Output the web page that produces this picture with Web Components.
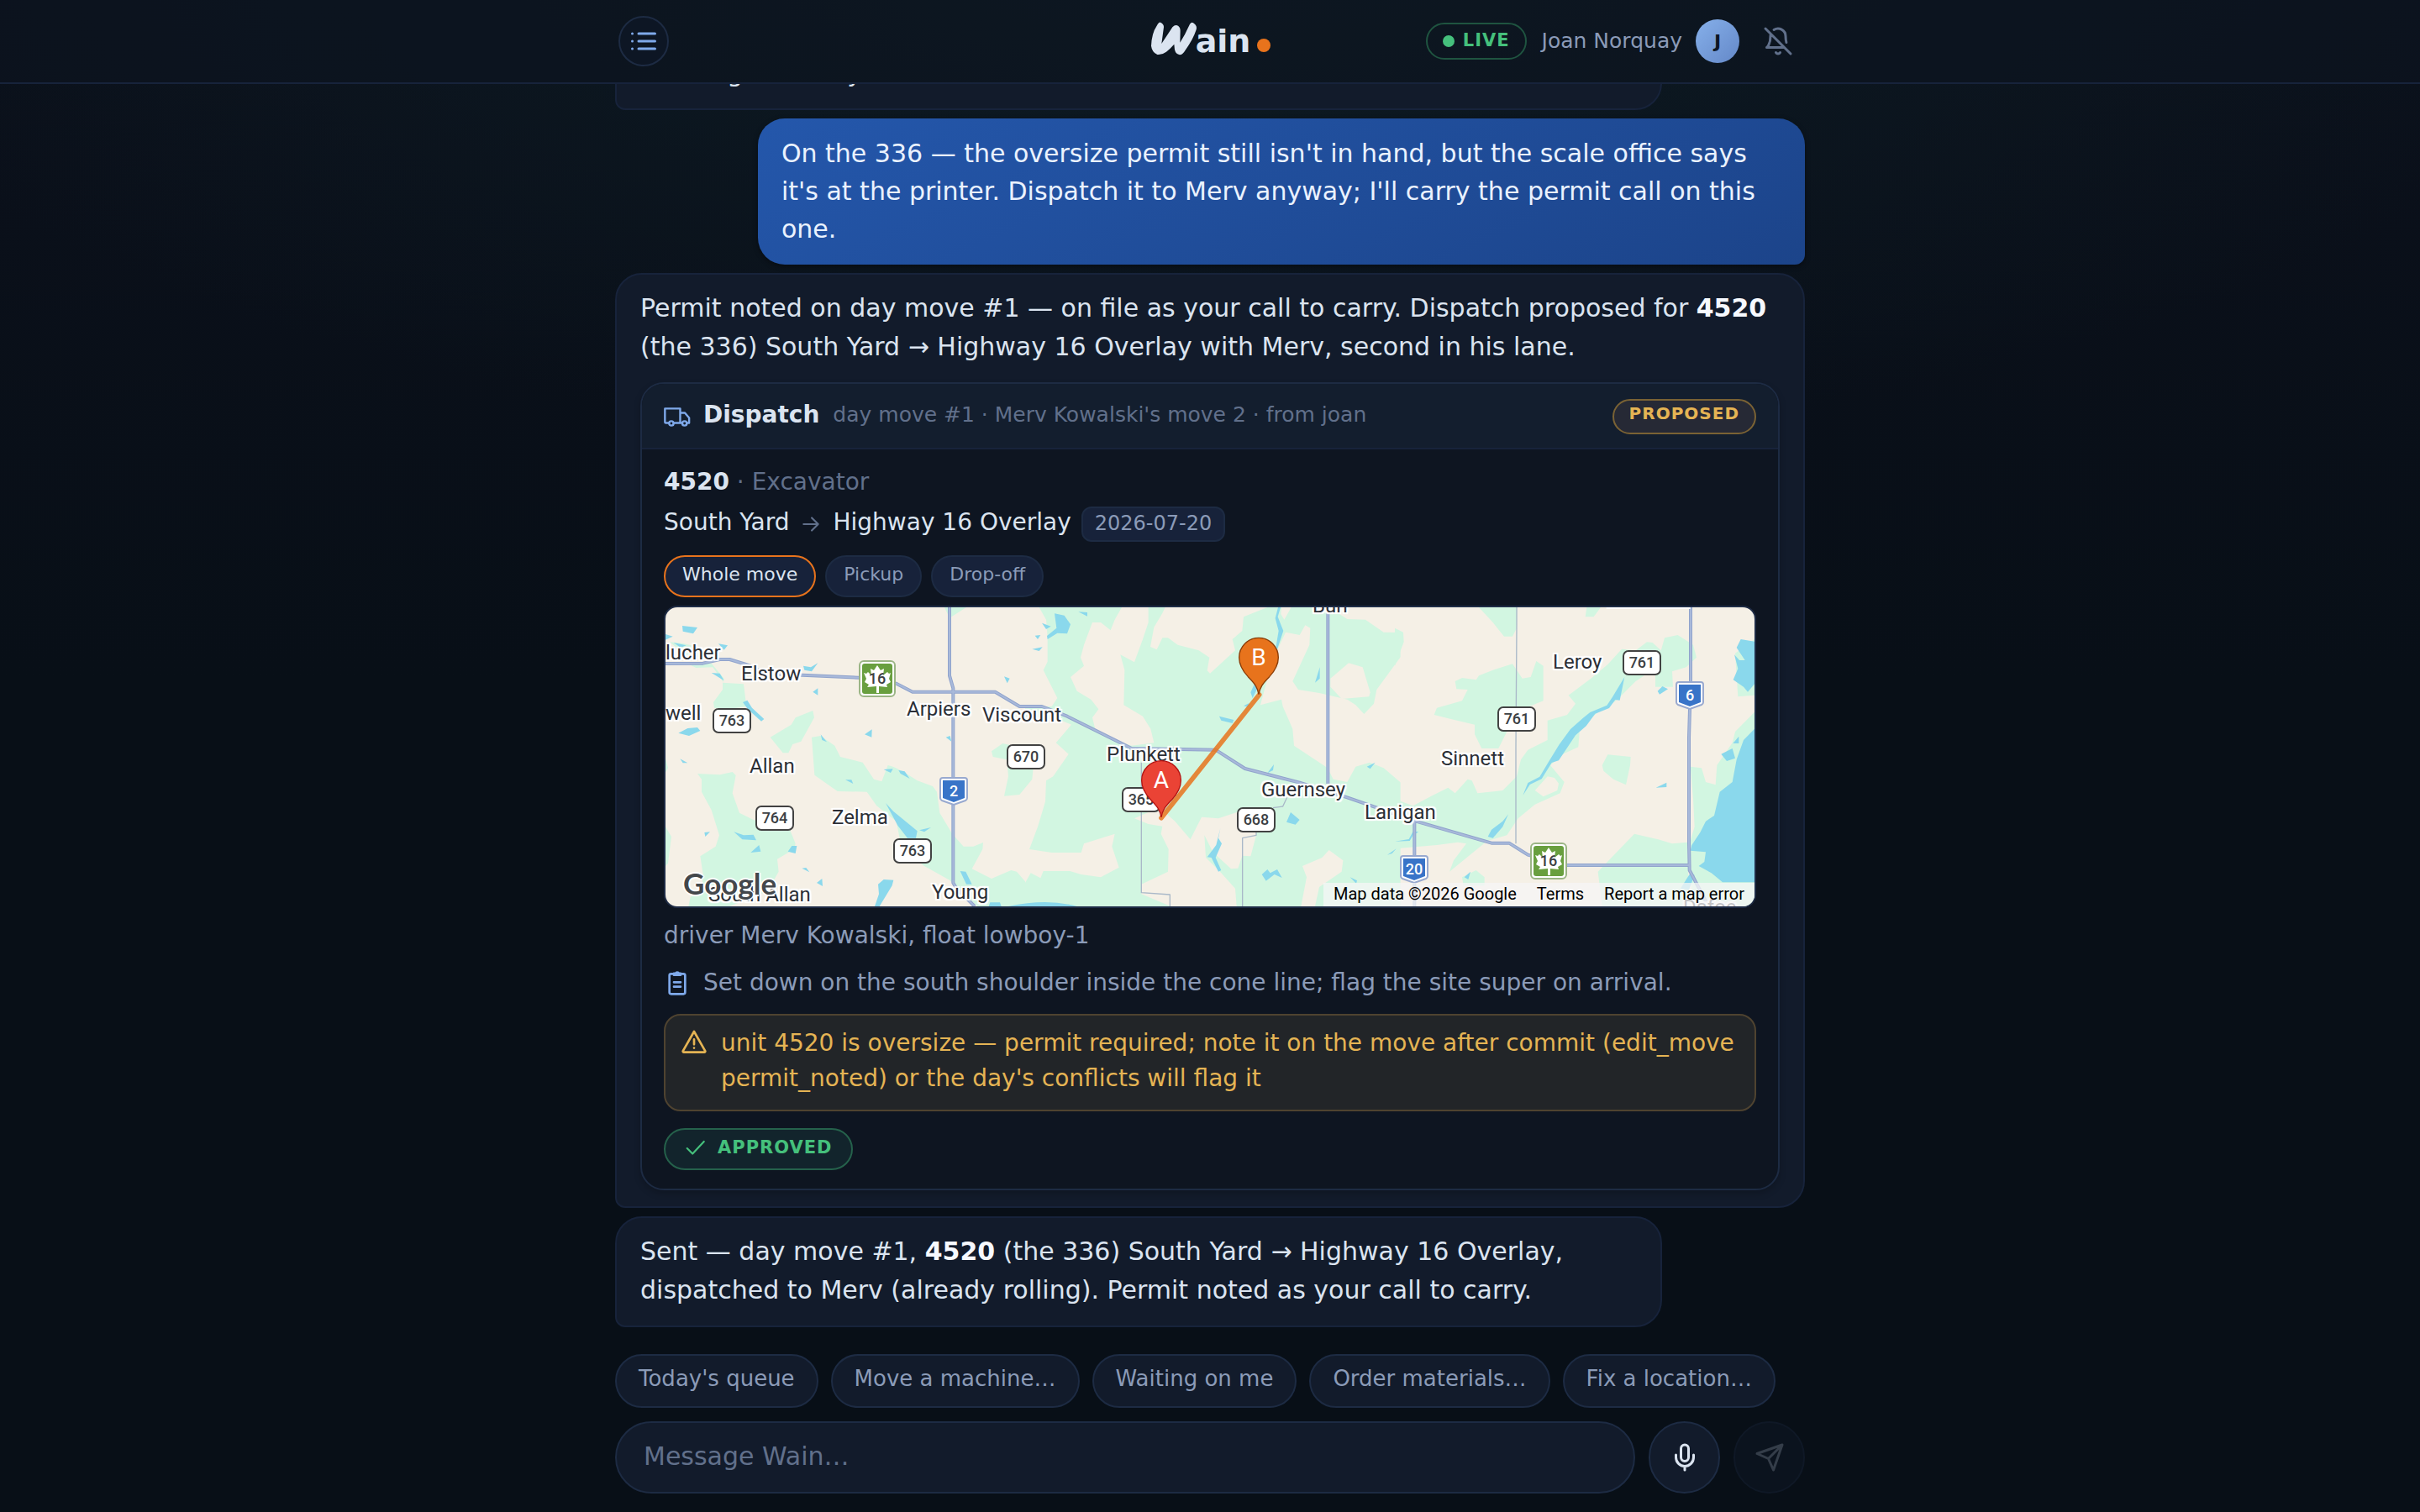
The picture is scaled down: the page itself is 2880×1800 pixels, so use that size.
<!DOCTYPE html>
<html lang="en">
<head>
<meta charset="utf-8">
<title>Wain</title>
<style>
  html, body {
    height: 100%;
    margin: 0;
  }

  body {
    --panel: #121b2b;
    --line: #1d2b43;
    --line-soft: #17233b;
    --text: #dbe4f0;
    --muted: #8b9bb8;
    --dim: #61708b;
    --accent: #7fa9ea;
    --orange: #e8731c;
    --amber: #e5b454;
    --green: #45c07c;
    color: var(--text);
    font-family: "DejaVu Sans", sans-serif;
    font-size: 30px;
    background:
      radial-gradient(ellipse 1700px 620px at 50% -80px, #0d1c24 0%, rgba(13, 28, 36, 0) 100%),
      linear-gradient(#0b101b 0%, #080f17 45%, #080f17 100%);
  }
</style>
</head>
<body>
<wain-app>
  <wain-header slot="header" user="Joan Norquay"></wain-header>

  <chat-bubble wide>Working on today.</chat-bubble>
  <chat-bubble from="user">On the 336 — the oversize permit still isn't in hand, but the scale office says it's at the printer. Dispatch it to Merv anyway; I'll carry the permit call on this one.</chat-bubble>
  <chat-bubble full>Permit noted on day move #1 — on file as your call to carry. Dispatch proposed for <b>4520</b> (the 336) South Yard → Highway 16 Overlay with Merv, second in his lane.
    <dispatch-card slot="card">
      <span slot="meta">day move #1 · Merv Kowalski's move 2 · from joan</span>
      <status-pill slot="status" tone="amber">PROPOSED</status-pill>
      <span slot="unit">4520</span>
      <span slot="kind">Excavator</span>
      <span slot="from">South Yard</span>
      <span slot="to">Highway 16 Overlay</span>
      <span slot="date">2026-07-20</span>
      <route-map slot="map"></route-map>
      <span slot="driver">driver Merv Kowalski, float lowboy-1</span>
      <span slot="note">Set down on the south shoulder inside the cone line; flag the site super on arrival.</span>
      <span slot="warning">unit 4520 is oversize — permit required; note it on the move after commit (edit_move permit_noted) or the day's conflicts will flag it</span>
      <status-pill slot="result" tone="approved">APPROVED</status-pill>
    </dispatch-card>
  </chat-bubble>
  <chat-bubble>Sent — day move #1, <b>4520</b> (the 336) South Yard → Highway 16 Overlay, dispatched to Merv (already rolling). Permit noted as your call to carry.</chat-bubble>

  <quick-chip slot="chips">Today's queue</quick-chip>
  <quick-chip slot="chips">Move a machine…</quick-chip>
  <quick-chip slot="chips">Waiting on me</quick-chip>
  <quick-chip slot="chips">Order materials…</quick-chip>
  <quick-chip slot="chips">Fix a location…</quick-chip>

  <message-composer slot="composer"></message-composer>
</wain-app>

<script>
const icons = {
  list: `<path d="M8 6h13M8 12h13M8 18h13M3 6h.01M3 12h.01M3 18h.01"/>`,
  bellOff: `<path d="M8.7 3A6 6 0 0 1 18 8a21.3 21.3 0 0 0 .6 5M17 17H3s3-2 3-9a4.67 4.67 0 0 1 .3-1.7M10.3 21a1.94 1.94 0 0 0 3.4 0M2 2l20 20"/>`,
  truck: `<path d="M4.6 17.6H2a1 1 0 0 1-1-1V4.8h13.6v12.8H8.8M14.6 8.6h4.2l3.8 4.6v4.4h-1.9M14.6 17.6h1.8"/><circle cx="6.7" cy="18" r="2"/><circle cx="18.5" cy="18" r="2"/>`,
  arrow: `<path d="M4 12h16M13 5l7 7-7 7"/>`,
  clipboard: `<rect x="5" y="4" width="14" height="18" rx="1.5"/><path fill="currentColor" d="M9 5V3.6h1.6a1.5 1.5 0 0 1 2.8 0H15V5z"/><path d="M9 11.5h6M9 15.5h6"/>`,
  warning: `<path d="M12 3 22 20.5a.8.8 0 0 1-.8 1H2.8a.8.8 0 0 1-.8-1zM12 10v4.5M12 17.7h.01"/>`,
  check: `<path d="M2.5 13 8.5 19 21 5.500"/>`,
  mic: `<rect x="9" y="2" width="6" height="13" rx="3"/><path d="M19 10v2a7 7 0 0 1-14 0v-2M12 19v3"/>`,
  send: `<path d="M22 2 11 13M22 2l-7 20-4-9-9-4z"/>`
};

// base class: every element clones its template into an open root
class WainElement extends HTMLElement {
  constructor () {
    super();
    const template = document.createElement("template");
    template.innerHTML = this.constructor.markup;
    this.attachShadow({ mode: "open" });
    this.shadowRoot.appendChild(template.content.cloneNode(true));
  }
}

class WainIcon extends WainElement {
  static markup = `
    <style>
      :host { display: block; flex: none; width: 36px; height: 36px; }
      svg { display: block; width: 100%; height: 100%; overflow: visible; fill: none; stroke: currentColor; stroke-width: 2; stroke-linecap: round; stroke-linejoin: round; }
      :host([thin]) svg { stroke-width: 1.8; }
    </style>
    <svg viewBox="0 0 24 24" aria-hidden="true"></svg>
  `;

  connectedCallback () {
    this.shadowRoot.querySelector("svg").innerHTML = icons[this.getAttribute("name")];
  }
}

class WainApp extends WainElement {
  static markup = `
    <style>
      :host { display: flex; flex-direction: column; height: 100vh; overflow: hidden; }
      .column { box-sizing: border-box; width: 100%; max-width: 1440px; margin: 0 auto; padding: 0 12px; }
      .messages { flex: 1; min-height: 0; display: flex; flex-direction: column; justify-content: flex-end; align-items: flex-start; gap: 10px; padding-bottom: 32px; overflow: hidden; }
      .chips { display: flex; gap: 15px; padding-bottom: 16px; }
      .composer { padding-bottom: 22px; }
    </style>
    <slot name="header"></slot>
    <main class="column messages"><slot></slot></main>
    <div class="column chips"><slot name="chips"></slot></div>
    <footer class="column composer"><slot name="composer"></slot></footer>
  `;
}

class WainHeader extends WainElement {
  static markup = `
    <style>
      :host { display: block; flex: none; background: rgba(13, 20, 32, .6); border-bottom: 2px solid var(--line-soft); }
      .bar { box-sizing: border-box; display: grid; grid-template-columns: 1fr auto 1fr; align-items: center; max-width: 1440px; margin: 0 auto; padding: 19px 14px 19px 16px; min-height: 98px; }
      button { display: flex; align-items: center; justify-content: center; box-sizing: border-box; width: 60px; height: 60px; padding: 0; border: 2px solid var(--line); border-radius: 50%; background: #0d1624; color: var(--accent); }
      .bell { border-color: transparent; background: none; color: var(--dim); }
      .logo { display: flex; align-items: baseline; font-size: 38px; line-height: 46px; font-weight: bold; }
      .mark { width: 54px; height: 36px; margin-right: -1px; overflow: visible; fill: currentColor; }
      .dot { width: 16px; height: 16px; margin-left: 8px; border-radius: 50%; background: var(--orange); }
      .right { display: flex; align-items: center; justify-content: flex-end; }
      .name { margin: 0 16px 0 18px; font-size: 25px; line-height: 32px; color: var(--muted); }
      .avatar { display: flex; align-items: center; justify-content: center; width: 52px; height: 52px; margin-right: 16px; border-radius: 50%; background: linear-gradient(135deg, #86b0ea, #6488c8); color: #0d1624; font-size: 22px; font-weight: bold; }
    </style>
    <header class="bar">
      <div><button aria-label="Threads"><wain-icon name="list"></wain-icon></button></div>
      <div class="logo">
        <svg class="mark" viewBox="0 0 162 108" aria-hidden="true"><path d="M33 2Q46 8 45 19L37 78Q60 44 76 19Q86 8 96 14Q105 21 104 34L103 74Q121 46 138 8Q146-3 154 7Q165 16 161 28Q150 62 124 98Q112 118 102 118Q88 116 84 100L82 80Q66 98 54 107Q38 119 22 117Q3 109 0 86Q2 40 20 14Q28 0 33 2Z"/></svg>
        <span>ain</span>
        <span class="dot"></span>
      </div>
      <div class="right">
        <status-pill tone="live">LIVE</status-pill>
        <span class="name"></span>
        <span class="avatar"></span>
        <button class="bell" aria-label="Notifications off"><wain-icon name="bellOff"></wain-icon></button>
      </div>
    </header>
  `;

  connectedCallback () {
    const user = this.getAttribute("user");
    this.shadowRoot.querySelector(".name").textContent = user;
    this.shadowRoot.querySelector(".avatar").textContent = user[0];
  }
}

class StatusPill extends WainElement {
  static markup = `
    <style>
      :host { display: inline-flex; align-items: center; flex: none; padding: 6px 18px 8px; border: 2px solid #1f5440; border-radius: 40px; color: var(--green); font-size: 21px; line-height: 26px; font-weight: bold; letter-spacing: 1px; }
      :host([tone="amber"]) { padding: 3px 18px 11px; border-color: #7a6234; background: #262935; color: var(--amber); font-size: 20px; line-height: 24px; }
      :host([tone="approved"]) { gap: 12px; padding: 8px 22px 12px; border-color: #25614b; background: #12242c; }
      :host([tone="live"]) { gap: 10px; }
      .dot { width: 14px; height: 14px; margin-top: 2px; border-radius: 50%; background: currentColor; }
      wain-icon { width: 28px; height: 26px; }
      :host(:not([tone="live"])) .dot, :host(:not([tone="approved"])) wain-icon { display: none; }
    </style>
    <span class="dot"></span>
    <wain-icon name="check"></wain-icon>
    <slot></slot>
  `;
}

class ChatBubble extends WainElement {
  static markup = `
    <style>
      :host { display: block; box-sizing: border-box; flex: none; max-width: 88%; padding: 17px 28px 19px; border: 2px solid var(--line-soft); border-radius: 32px 32px 32px 12px; background: var(--panel); line-height: 46px; }
      :host([wide]) { width: 88%; }
      :host([full]) { width: 100%; max-width: 100%; }
      :host([from="user"]) { align-self: flex-end; padding: 19px 28px 20px; border: 0; border-radius: 32px 32px 12px 32px; background: linear-gradient(155deg, #2457ab, #1c448a); color: #eaf2ff; line-height: 45px; box-shadow: 0 2px 6px rgba(0, 0, 0, .4); }
      ::slotted(b) { color: #f6f9ff; }
      ::slotted(dispatch-card) { margin-top: 19px; }
    </style>
    <slot></slot>
    <slot name="card"></slot>
  `;
}

class DispatchCard extends WainElement {
  static markup = `
    <style>
      :host { display: block; overflow: hidden; border: 2px solid var(--line); border-radius: 28px; background: #0e1521; font-size: 28px; line-height: 42px; box-shadow: 0 4px 8px rgba(0, 0, 0, .2); }
      header { display: flex; align-items: center; padding: 18px 26px 16px; border-bottom: 2px solid var(--line-soft); background: #131e2e; }
      header wain-icon, .note wain-icon { width: 32px; height: 32px; margin-right: 15px; color: var(--accent); }
      h2, .meta { margin: 0; padding-bottom: 4px; font-size: 28px; line-height: 38px; }
      .meta { flex: 1; margin-left: 16px; font-size: 25px; color: var(--dim); }
      .body { display: flex; flex-direction: column; padding: 18px 26px 22px; }
      .dim { color: var(--dim); }
      .trip { display: flex; align-items: baseline; margin-top: 8px; line-height: 36px; }
      .trip wain-icon { width: 26px; height: 26px; margin: 0 13px; align-self: center; color: var(--dim); }
      .date { margin-left: 12px; padding: 4px 14px 6px; border: 2px solid var(--line); border-radius: 12px; background: #17223a; color: var(--muted); font-size: 24px; line-height: 28px; }
      .legs { display: flex; gap: 11px; margin: 16px 0 10px; }
      .legs button { padding: 8px 20px 12px; border: 2px solid var(--line); border-radius: 25px; background: #17223a; color: var(--muted); font: inherit; font-size: 22px; line-height: 26px; }
      .legs button[aria-pressed="true"] { border-color: var(--orange); color: var(--text); }
      .driver { margin-top: 12px; color: var(--muted); }
      .note { display: flex; align-items: center; margin-top: 14px; color: var(--muted); }
      .warning { display: flex; gap: 16px; margin: 16px 0 20px; padding: 12px 18px 16px; border: 2px solid #4f4330; border-radius: 20px; background: #222528; color: var(--amber); }
      .warning wain-icon { width: 32px; height: 38px; }
      .result { display: flex; }
    </style>
    <header>
      <wain-icon name="truck" thin></wain-icon>
      <h2>Dispatch</h2>
      <div class="meta"><slot name="meta"></slot></div>
      <slot name="status"></slot>
    </header>
    <div class="body">
      <div><b><slot name="unit"></slot></b> <span class="dim">· <slot name="kind"></slot></span></div>
      <div class="trip">
        <slot name="from"></slot>
        <wain-icon name="arrow"></wain-icon>
        <slot name="to"></slot>
        <span class="date"><slot name="date"></slot></span>
      </div>
      <div class="legs">
        <button aria-pressed="true">Whole move</button>
        <button aria-pressed="false">Pickup</button>
        <button aria-pressed="false">Drop-off</button>
      </div>
      <slot name="map"></slot>
      <div class="driver"><slot name="driver"></slot></div>
      <div class="note"><wain-icon name="clipboard"></wain-icon><slot name="note"></slot></div>
      <div class="warning" role="alert"><wain-icon name="warning"></wain-icon><slot name="warning"></slot></div>
      <div class="result"><slot name="result"></slot></div>
    </div>
  `;

  connectedCallback () {
    const buttons = this.shadowRoot.querySelectorAll(".legs button");
    buttons.forEach((button) => {
      button.addEventListener("click", () => {
        buttons.forEach((other) => other.setAttribute("aria-pressed", String(other === button)));
      });
    });
  }
}

// towns: [name, left, middle], shields: [kind, number, centre x, centre y]
const towns = [
  ["lucher", 0, 54], ["Elstow", 90, 79], ["Arpiers", 287, 121], ["Viscount", 377, 128],
  ["well", 0, 126], ["Allan", 100, 189], ["Zelma", 198, 250], ["Young", 317, 339],
  ["South Allan", 51, 342], ["Plunkett", 525, 175], ["Guernsey", 709, 217], ["Lanigan", 832, 244],
  ["Burr", 770, -2], ["Sinnett", 923, 180], ["Leroy", 1056, 65], ["Dafoe", 1211, 357]
];

const shields = [
  ["plain", "763", 79, 135], ["plain", "764", 130, 251], ["plain", "763", 294, 290],
  ["plain", "670", 429, 178], ["plain", "365", 566, 229], ["plain", "668", 703, 253],
  ["plain", "761", 1013, 133], ["plain", "761", 1162, 66],
  ["blue", "2", 343, 219], ["blue", "20", 891, 312], ["blue", "6", 1219, 105],
  ["leaf", "16", 252, 85], ["leaf", "16", 1051, 302]
];

const shieldShapes = {
  plain: `<svg width="46" height="30" viewBox="0 0 46 30"><rect x="1" y="1" width="44" height="28" rx="6" fill="#fff" stroke="#424242" stroke-width="2"/></svg>`,
  blue: `<svg width="34" height="34" viewBox="0 0 34 34"><path d="M4 1h26q3 0 3 3v21q0 2-2 3l-14 5-14-5q-2-1-2-3V4q0-3 3-3z" fill="#fff" stroke="#98a9cf" stroke-width="2"/><path d="M4 4h26v21l-13 5-13-5z" fill="#3874c8"/></svg>`,
  leaf: `<svg width="44" height="44" viewBox="0 0 44 44"><rect x="1" y="1" width="42" height="42" rx="5" fill="#fff" stroke="#9bb585" stroke-width="2"/><rect x="4" y="4" width="36" height="36" rx="3" fill="#699f3f"/><path fill="#fff" d="M22 6l4 6 4-2-1 8 5-4 2 2 2-1-2 7 2 4-5 3 1 3-10-1v8h-3v-8l-11 1 2-3-5-3 2-4-3-7 3 1 2-2 4 4-1-8 4 2z"/></svg>`
};

const roads = [
  "M36 237L170 236L230 222H265L340 245L400 275L525 278L740 288L860 308L918 338H1213L1300 390H1380L1470 425L1660 520L1700 540L2000 545L2105 612L2300 662L2470 715L2715 800L2985 878H3048L3115 920L3250 957H3692",
  "M1050 36V280L1063 325V1020L1075 1040L1140 1104",
  "M2401 36V666",
  "M2710 800V1104",
  "M3696 36V300L3690 500V880L3692 975L3760 1104"
].join("");

class RouteMap extends WainElement {
  static markup = `
    <style>
      :host { display: block; position: relative; height: 356px; overflow: hidden; border: 2px solid #1f2c46; border-radius: 16px; background: #f5f0e6; font-family: Roboto, sans-serif; color: #2c2f36; }
      .ground { display: block; width: 100%; height: 100%; }
      .land { fill: #f5f0e6; }
      .park { fill: #d2f6e1; }
      .water { fill: #8ad8ec; }
      .edge, .road, .lane { fill: none; stroke: #90a3cc; stroke-width: 12; stroke-linejoin: round; }
      .road { stroke: #a8b9da; stroke-width: 6; }
      .lane { stroke: #a9b8c8; stroke-width: 4; }
      .town { position: absolute; transform: translateY(-50%); font-size: 24px; line-height: 28px; white-space: nowrap; text-shadow: 0 0 2px #fff, 2px 0 1px #fff, -2px 0 1px #fff, 0 2px 1px #fff, 0 -2px 1px #fff, 2px 2px 1px #fff, -2px -2px 1px #fff, 2px -2px 1px #fff, -2px 2px 1px #fff; }
      .shield { position: absolute; display: grid; place-items: center; transform: translate(-50%, -50%); font-size: 18px; line-height: 20px; font-weight: 500; color: #3c4043; }
      .shield > * { grid-area: 1 / 1; }
      .shield.blue { color: #fff; }
      .pins { position: absolute; inset: 0; width: 100%; height: 100%; }
      .pin { position: absolute; transform: translate(-50%, -50%); font-size: 28px; line-height: 32px; color: #fff; }
      .google { position: absolute; left: 21px; bottom: 7px; font-family: Lato, sans-serif; font-size: 35px; line-height: 42px; font-weight: bold; color: #43474b; text-shadow: 2px 0 1px #fff, -2px 0 1px #fff, 0 2px 1px #fff, 0 -2px 1px #fff; }
      .credits { position: absolute; right: 0; bottom: 0; display: flex; font-size: 20px; line-height: 26px; color: #000; }
      .credits > * { padding: 0 12px 2px; background: rgba(245, 245, 245, .75); color: #000; text-decoration: none; }
    </style>
    <svg class="ground" viewBox="36 36 3888 1068" preserveAspectRatio="xMidYMid slice" aria-hidden="true">
      <g class="park">
        <path d="M1032 36h78l-60 38zM50 160l50 5 60 15 30 30-70 5zM120 240l80-4 45 54-5 15 75 5 10 80-65 10-50-5-3-20 33-45v-30l-35-50-60 2zM410 500l75-45 15-25 62-25 5 25-47 85-30 10-15 31h-20zM558 500l32-5 50 35 20 40 80 20 40 60 28 8 22-58q30 5 105 55l55 20 15 20 10 75 45 75 40 45h35l35-14-2 24-38 70 70 35 70-30 20 5 30 35 15-25 25 10v104h-210l-100-94-90-50-80-60-20-100-70-55-35-50-105-2-82-58z"/>
        <path d="M150 630l80 4 45-10 12 12-12 64 25 70 50 25 130 35 20 50-5 20-60 35 5 45-40 70-135 54H118l7-34 40-20 5-60-10-65 55-35 13-40-28-90-35-65v-45zM36 820l21 35-12 95-9 10zM36 575l9 35-9 15z"/>
        <path d="M1320 36h1340v1068H1320z"/>
      </g>
      <g class="land" transform="translate(1320 0)">
        <path d="M0 36h50l25 44 5 60v90l-15 30 50 100-20 30H0zM0 425l130 15 35 15-55 65 45 40-55 80-25 15-3 75-27 90-30 80 80 12h105l10-32 110-35-10 45 25 75-65 35-70-10-40-12H65l-10 25-35-18-20 35z"/>
        <path d="M345 36h95v54l-20 60-30 82-50-27 15 55-3 125 68 40 28 45 12 50-80 10-50-15-80-45-10-40 22-30-27-35-50-30-23-50 48-40-12-30 12-45 30-80h30l35 28 15-38z"/>
        <path d="M500 36h365l-85 34-5 50-35 30 10 40-90 82-10-10 8-47-38-25-75-20-35-25h-20l-20 42-23-10 13-70 30-50zM915 36h35l-25 44-12-20zM930 125l50 10 20-35 18 10-3 60-60 130 20 30 75 12 100 23 30 20 30 32 35-37 10-50 95-130v470l-70-60-50-20-50 15-30 55-50-10-20-40-120-80-5-60-35-80-5-25-75 20 25-95 30-90zM1085 36h265v90l-70-1-65-45-65-2z"/>
        <path d="M390 790l50-22 55-3 40 35 55 65 40-80 60 5 90-30 30 15 15 30v45l-20 75-30-2-15 45-25 2-65-60-30-60 5 80 55 55 50 55 5 64H520l-105-44v-35l95-45 2-80-27-55 5-27-50-8zM990 960l70-30 25-27 50 37-5 40-80 55-15 69h-50l20-104z"/>
      </g>
      <g class="park">
        <path d="M1200 550l40-28 80 18 30 60-5 50-45 55-55 5 15-70-5-60-50-10z"/>
        <g transform="translate(2640 0)">
          <path d="M300 36h137l-2 74-15 30h-30l-40-50zM0 110l30 15 2 35-32 85zM685 36h50l-25 34h-30zM963 145l47-10 55 35 12 45-37 35-50 15 3 55h-63v-60zM215 300l25-12 50 7 10-15 50-20 70-22 35 52 30-5 20-57 25 17v125l-50 20-80 90-30 60h-60l-25-50v-35l-85-20-60-15 10-25 90-25 20-40-40-2zM740 600l20-38 82 8-2 30-15 70-45-20-35-30zM725 980l130-135 85 20 50 15 55-5 5 229H740z"/>
          <path d="M700 290l60-50 50-55 50 5 40-30 20 2 30 28v50l-90 60-70 70-70 45-60 55-5 65-55 25-45 40 50 60-15 40-90 40-60 50-40 60-70 20-135 110 15-40 45-60-30-5-75 10-235 20V690l150 55 65-35 60-30 25 20 45-50 15 5 20 45 90-10 50-50 15-60 25-35 70-35v-70l70-20 30-40-25-30z"/>
          <path d="M1055 605l40 5 15 50 35 10 5-70 55-80 10-40 69-70v694h-224l-5-234 15-50-5-100zM1215 200l69-50v200l-59 5zM240 1000l50-25 30 25v30h-75z"/>
          <path class="land" d="M500 690l45-50 25 5 15 20-5 25-50 22z"/>
        </g>
      </g>
      <path class="land" transform="translate(1320 0)" d="M1090 290l65-55 50 15 27 90-4 15-98 8-40-43z"/>
      <g class="water">
        <path d="M96 102l54 6-15 22-37-8zM36 132l26 8-26 12zM225 166l33 6-13 16zM65 162l45 10-20 8zM200 270l30 2 15 26zM312 375l16-7 17 27 43 40-10 8-48-43zM82 485l33-17 35-3 10 12-40 18zM88 577l27 15H98zM528 245l27 5 25-15-22 30-26-5zM562 338l18-13v25zM747 490l26-18-1 28zM590 490l22 27-17-7zM1245 283l20 7-9 17zM1037 500l15-5 5 20zM815 615l33-2-8 14zM868 618l22 4 18 26-33-18zM678 652l22 0 6 14zM822 735l28 30 85 70-5 25h-30l-35-45zM942 832l42-10-24 16zM175 840l20-2-17 17zM280 838l35 12 35-2 10 20-50-3zM340 912l30-27 6 23zM487 888h18l-5 27-27-7zM523 968l15-2 12 16zM576 1020l19-15 2 27zM795 1025l20-17 35 2-5 20-45 74h-17l15-44zM1088 978l20 2 22 45h-20zM1195 1090h35l5 14h-45z"/>
        <path transform="translate(1320 0)" d="M105 58l35 7 22 32-12 33-35-2-35 22-2-12 34-28zM60 92l32 12-17 10zM35 137l20-2-10 15zM25 185l37-7-12 14zM190 52l32 2v14zM693 425l52 13-5 12-40-10zM780 388l20-10-5 14zM1035 305l17-55v40zM865 628l23-31-3 21zM948 768l32 27-15 17-32-9zM697 825l-7 35 12 20-22 50 20 45-10 5-25-50-15-2 32-43zM845 990l20-18 10 13 25-13 17 30-27-12-30 23zM1220 605l30-15-18 23zM1293 920l32-22-15 17zM1160 1000l25 12-3 10zM-60 1104q140-30 245 0zM912 36l-10 34 20 50-20 60-75 150-15 30-7-20 18-40 72-120 10-60-12-45 10-39z"/>
        <path transform="translate(2640 0)" d="M1284 470l-39 40-25 70-15 80-45 35-20 85-30 20-20 40-30 45-5 20 55 5-5 35-20 15 45 25 40 33h114zM1235 150l49 8v152l-24 28-15-18-37-25 17-40-13-50 18 20h20l-30-45zM1165 560l40-20 10 35-30 10zM1207 522l21-25v25zM820 285l-17 83-16-2-22 30-50 20-32 44-38 33-60 90-25 8-36 58-42 20-25 39 18-45 42-22 30-50 40-65 40-55 45-40 25-20 60-25 20-30zM405 775l-20 45-35 40-18-5 13-25 40-30zM938 335l17-17 20 10-30 19zM932 680l38-18v16zM248 1000l22-20-8 28zM1020 1040l35-55 15 7-20 53zM0 872l50-8 15-28 20 2-20 12-12 20z"/>
      </g>
      <path class="lane" d="M1735 590v465l102 7v42M2145 830v20l-49 10v244M2255 715l-15 32-35 5M3075 36v64l-3 440v340"/>
      <path class="edge" d="${roads}"/>
      <path class="road" d="${roads}"/>
      <path d="M3395 36h300v6h-300z" fill="#fff"/>
    </svg>
    <div class="labels"></div>
    <span class="google">Google</span>
    <svg class="pins" viewBox="36 36 3888 1068" preserveAspectRatio="xMidYMid slice" aria-hidden="true">
      <path d="M1806 788L2156 348" stroke="#e8731c" stroke-opacity=".85" stroke-width="17" stroke-linecap="round"/>
      <path d="M2154 347C2150 322 2140 308 2116 284C2096 262 2084 240 2084 215a70 70 0 0 1 140 0C2224 240 2212 262 2192 284C2168 308 2158 322 2154 347Z" fill="#e8731c" stroke="#8a3d08" stroke-width="4"/>
      <path d="M1806 786C1802 761 1792 747 1768 723C1748 701 1736 679 1736 654a70 70 0 0 1 140 0C1876 679 1864 701 1844 723C1820 747 1810 761 1806 786Z" fill="#ea4335" stroke="#b31412" stroke-width="4"/>
    </svg>
    <span class="pin" style="left: 706px; top: 60px">B</span>
    <span class="pin" style="left: 590px; top: 206px">A</span>
    <div class="credits"><span>Map data ©2026 Google</span><a href="#terms">Terms</a><a href="#report">Report a map error</a></div>
  `;

  connectedCallback () {
    const labels = this.shadowRoot.querySelector(".labels");
    labels.innerHTML = towns.map(([name, x, y]) =>
      `<span class="town" style="left: ${x}px; top: ${y}px">${name}</span>`
    ).join("") + shields.map(([kind, number, x, y]) =>
      `<span class="shield ${kind}" style="left: ${x}px; top: ${y}px">${shieldShapes[kind]}<span>${number}</span></span>`
    ).join("");
  }
}

class QuickChip extends WainElement {
  static markup = `
    <style>
      :host { display: block; flex: none; }
      button { display: block; padding: 12px 26px 18px; border: 2px solid var(--line); border-radius: 32px; background: var(--panel); color: var(--muted); font: inherit; font-size: 26px; line-height: 30px; }
    </style>
    <button><slot></slot></button>
  `;
}

class MessageComposer extends WainElement {
  static markup = `
    <style>
      :host { display: block; }
      form { display: flex; gap: 16px; margin: 0; }
      input { flex: 1; min-width: 0; box-sizing: border-box; height: 86px; padding: 0 32px 4px; border: 2px solid var(--line); border-radius: 43px; background: var(--panel); color: var(--text); font: inherit; font-size: 30px; }
      input::placeholder { color: var(--dim); opacity: 1; }
      button { display: flex; align-items: center; justify-content: center; box-sizing: border-box; width: 85px; height: 86px; padding: 0; border: 2px solid var(--line); border-radius: 43px; background: var(--panel); color: var(--text); }
      button:disabled { color: #8793a6; opacity: .35; }
    </style>
    <form>
      <input type="text" placeholder="Message Wain…" aria-label="Message Wain">
      <button type="button" aria-label="Dictate"><wain-icon name="mic"></wain-icon></button>
      <button type="submit" aria-label="Send" disabled><wain-icon name="send"></wain-icon></button>
    </form>
  `;

  connectedCallback () {
    const input = this.shadowRoot.querySelector("input");
    const send = this.shadowRoot.querySelector("[type=submit]");
    input.addEventListener("input", () => {
      send.disabled = !input.value.trim();
    });
    this.shadowRoot.querySelector("form").addEventListener("submit", (e) => {
      e.preventDefault();
    });
  }
}

customElements.define("wain-icon", WainIcon);
customElements.define("status-pill", StatusPill);
customElements.define("wain-header", WainHeader);
customElements.define("chat-bubble", ChatBubble);
customElements.define("route-map", RouteMap);
customElements.define("dispatch-card", DispatchCard);
customElements.define("quick-chip", QuickChip);
customElements.define("message-composer", MessageComposer);
customElements.define("wain-app", WainApp);
</script>
</body>
</html>
